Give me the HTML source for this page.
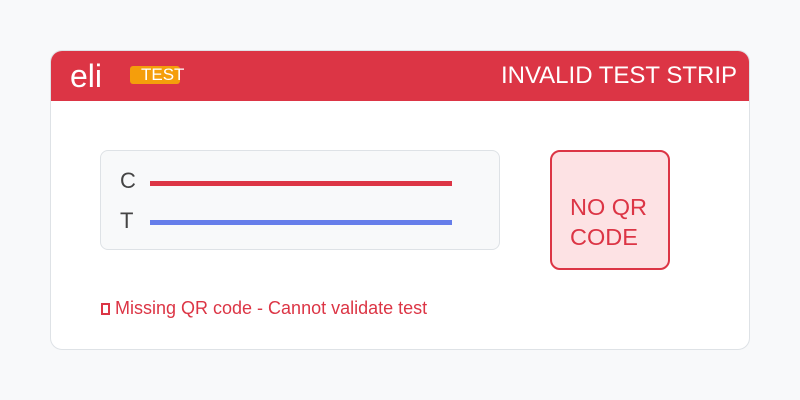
<!DOCTYPE html><html><head><style>
body{margin:0;width:800px;height:400px;background:#f8f9fa;font-family:"Liberation Sans",sans-serif;position:relative;overflow:hidden}
.card{position:absolute;left:50px;top:50px;width:698px;height:298px;background:#fff;border:1px solid #dee2e6;border-radius:12px;overflow:hidden}
.hdr{position:absolute;left:-1px;top:-1px;width:700px;height:51px;background:#dc3545}
.abs{position:absolute;white-space:nowrap}
</style></head><body>
<div class="card">
<div class="hdr">
<div class="abs" style="left:20px;top:8px;font-size:32px;color:#fff">eli</div>
<div class="abs" style="left:80px;top:16px;width:50px;height:18px;background:#f59e0b;border-radius:3px"></div>
<div class="abs" style="left:91px;top:15px;font-size:17px;color:#fff">TEST</div>
<div class="abs" style="right:13px;top:12px;font-size:24px;color:#fff">INVALID TEST STRIP</div>
</div>
<div class="abs" style="left:49px;top:99px;width:398px;height:98px;background:#f8f9fa;border:1px solid #dee2e6;border-radius:8px"></div>
<div class="abs" style="left:69px;top:117px;font-size:22px;color:#444">C</div>
<div class="abs" style="left:99px;top:130px;width:302px;height:5px;background:#dc3545"></div>
<div class="abs" style="left:69px;top:157px;font-size:22px;color:#444">T</div>
<div class="abs" style="left:99px;top:169px;width:302px;height:5px;background:#667eea"></div>
<div class="abs" style="left:499px;top:99px;width:116px;height:116px;background:#fde2e4;border:2px solid #dc3545;border-radius:10px"></div>
<div class="abs" style="left:519px;top:141px;font-size:23.5px;line-height:30px;color:#dc3545">NO QR<br>CODE</div>
<div class="abs" style="left:50px;top:247px;font-size:18px;color:#dc3545"><span style="display:inline-block;width:9px;height:12px;border:2px solid #dc3545;box-sizing:border-box;vertical-align:-1px"></span> Missing QR code - Cannot validate test</div>
</div>
</body></html>
